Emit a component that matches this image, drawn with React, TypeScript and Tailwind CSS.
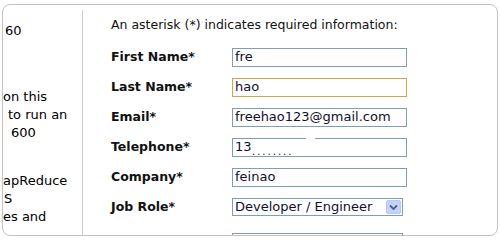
import React from "react";

const font = { fontFamily: '"DejaVu Sans", Tahoma, Verdana, sans-serif' };

function TextInput({ value, focused }: { value: string; focused?: boolean }) {
  return (
    <div
      className={
        "w-[175px] h-[19px] flex items-center px-[2px] text-[13px] text-[#10102a] bg-white border " +
        (focused ? "border-[#d2a54c]" : "border-[#7f9db9]")
      }
    >
      {value}
    </div>
  );
}

function Select({ value }: { value: string }) {
  return (
    <div className="w-[171px] h-[18px] flex items-center justify-between border border-[#7f9db9] bg-white pl-[2px] pr-[1px] text-[13px] text-[#10102a]">
      <span>{value}</span>
      <span className="w-[15px] h-[14px] flex items-center justify-center bg-[#c3d3fd] border border-[#b6c8f4] rounded-[2px]">
        <svg width="9" height="7" viewBox="0 0 9 7">
          <path d="M1 1.5 L4.5 5 L8 1.5" fill="none" stroke="#4d6185" strokeWidth="1.8" />
        </svg>
      </span>
    </div>
  );
}

function Row({ label, children }: { label: string; children: React.ReactNode }) {
  return (
    <div className="h-[30px] flex items-center">
      <div className="w-[121px] font-bold text-[12.5px] text-[#111]">{label}</div>
      {children}
    </div>
  );
}

export default function App() {
  return (
    <div className="w-[500px] h-[240px] bg-white overflow-hidden pt-[4px] pl-[2px]" style={font}>
      <div className="w-[496px] h-[232px] border border-[#c8bfbf] rounded-[8px] overflow-hidden flex">
        <div className="w-[79px] shrink-0 overflow-hidden text-[13px] leading-[18px] text-black">
          <div className="pt-[17px] pl-[2px]">60</div>
          <div className="mt-[48px]">on this</div>
          <div className="whitespace-nowrap pl-[5px]">to run an</div>
          <div className="whitespace-nowrap pl-[8px]">600</div>
          <div className="mt-[30px] whitespace-nowrap">apReduce</div>
          <div className="whitespace-nowrap pl-[1px]">S</div>
          <div className="whitespace-nowrap">es and</div>
        </div>
        <div className="mt-[5px] w-px shrink-0 bg-[#cfcfcf]" />
        <div className="pl-[28px] pt-[11px] flex flex-col relative">
          <div className="h-[18px] leading-[18px] text-[12.5px] text-[#111] whitespace-nowrap">
            An asterisk (*) indicates required information:
          </div>
          <div className="mt-[8px] flex flex-col">
            <Row label="First Name*">
              <TextInput value="fre" />
            </Row>
            <Row label="Last Name*">
              <TextInput value="hao" focused />
            </Row>
            <Row label="Email*">
              <TextInput value="freehao123@gmail.com" />
            </Row>
            <Row label="Telephone*">
              <div className="relative">
                <TextInput value="13" />
                <span className="absolute left-[20px] top-[12px] text-[10px] leading-[4px] tracking-[2px] text-[#10102a]">........</span>
                <span className="absolute left-[74px] top-[-4px] w-[9px] h-[5px] bg-white" />
              </div>
            </Row>
            <Row label="Company*">
              <TextInput value="feinao" />
            </Row>
            <Row label="Job Role*">
              <Select value="Developer / Engineer" />
            </Row>
            <div className="h-[30px] flex items-center mt-[5px]">
              <div className="w-[121px]" />
              <Select value="" />
            </div>
          </div>
        </div>
      </div>
    </div>
  );
}
